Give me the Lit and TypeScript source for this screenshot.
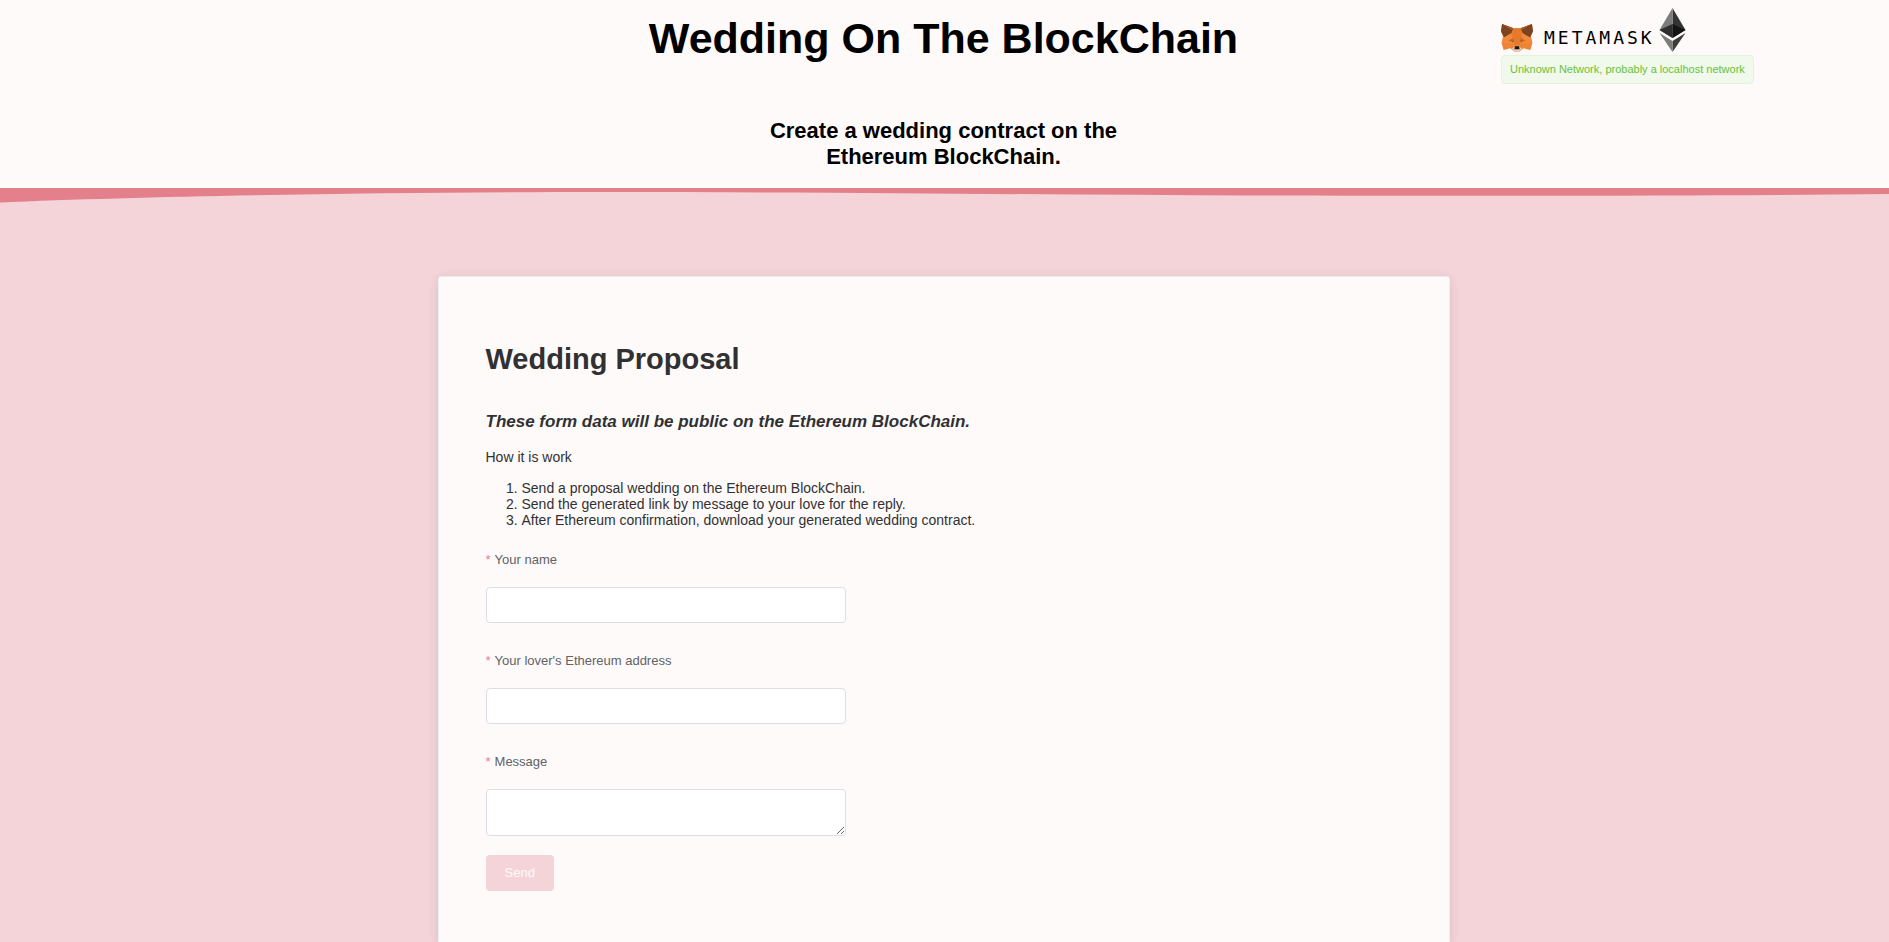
import { LitElement, html, css, svg } from "lit";
import { customElement, property } from "lit/decorators.js";

const fox = svg`
  <path fill="#ee8336" d="M1 1 L12 5 H19 L30 1 L31 8 L29 13 L30.500 19 L28.500 26 L22 24.500 L18 27.500 H13 L9 24.500 L2.500 26 L0.500 19 L2 13 L0 8 Z"/>
  <path fill="#7a4420" d="M1 1 L12 5 L10 10 L3 14 L0 8 Z M30 1 L19 5 L21 10 L28 14 L31 8 Z"/>
  <path fill="#a55a2a" d="M1 1 L12 5 L11 7 Z M30 1 L19 5 L20 7 Z"/>
  <path fill="#f08a3c" d="M3 14 L10 10 L13 20 L1 19 Z M28 14 L21 10 L18 20 L30 19 Z"/>
  <path fill="#e57a2c" d="M12 5 H19 L20 11 L18 21 H13 L11 11 Z"/>
  <path fill="#d56a22" d="M7 17 L12 14 L13 19 Z M24 17 L19 14 L18 19 Z"/>
  <path fill="#8a5a44" d="M9.500 16.500 L12 17 L11.500 18.500 Z M21.500 16.500 L19 17 L19.500 18.500 Z"/>
  <path fill="#e9c9b4" d="M10.500 25 L13 23 H18 L20.500 25 L18 27.500 H13 Z"/>
  <path fill="#161616" d="M13.500 22.500 H17.500 L18 25.500 H13 Z"/>`;

const diamond = svg`
  <path fill="#343434" d="M13 0 V30 L26 22 Z"/>
  <path fill="#7c7c7c" d="M13 0 L0 22 L13 30 Z"/>
  <path fill="#141414" d="M13 16 V30 L26 22 Z"/>
  <path fill="#2e2e2e" d="M13 16 L0 22 L13 30 Z"/>
  <path fill="#3c3c3b" d="M13 33 V44 L26 25 Z"/>
  <path fill="#7c7c7c" d="M13 33 V44 L0 25 Z"/>`;

@customElement("network-status")
export class NetworkStatus extends LitElement {
  @property() message = "";

  static styles = css`
    :host {
      display: block;
    }
    .logos {
      display: flex;
      align-items: flex-end;
      height: 55px;
      box-sizing: border-box;
      padding-bottom: 3px;
    }
    .fox {
      width: 32px;
      height: 29px;
      margin-right: 11px;
    }
    .wordmark {
      font: 18px/28px "DejaVu Sans Mono", monospace;
      letter-spacing: 3px;
      color: #000;
    }
    .diamond {
      width: 27px;
      height: 44px;
      margin-left: 4px;
    }
    .badge {
      display: inline-block;
      box-sizing: border-box;
      padding: 0 8px;
      border: 1px solid #e1f3d8;
      border-radius: 4px;
      background: #f0f9eb;
      color: #67c23a;
      font-size: 11px;
      line-height: 27px;
      white-space: nowrap;
    }
  `;

  render() {
    return html`
      <div class="logos">
        <svg class="fox" viewBox="0 0 31 28" aria-hidden="true">${fox}</svg>
        <span class="wordmark">METAMASK</span>
        <svg class="diamond" viewBox="0 0 26 44" aria-hidden="true">${diamond}</svg>
      </div>
      <span class="badge">${this.message}</span>
    `;
  }
}

@customElement("app-root")
export class AppRoot extends LitElement {
  static styles = css`
    :host {
      display: flex;
      flex-direction: column;
      min-height: 100vh;
      background: #f4d4d8;
      color: #303133;
      font: 14px/16px "Liberation Sans", Arial, sans-serif;
    }
    .header {
      display: grid;
      grid-template-columns: 9fr 26fr 9fr;
      padding: 0 2px 18px 0;
      background: #fffafa;
      color: #000;
    }
    .intro {
      grid-column: 2;
      text-align: center;
    }
    .title {
      margin: 13px 0 55px;
      font-size: 43px;
      line-height: 50px;
    }
    .tagline {
      max-width: 400px;
      margin: 0 auto;
      font-size: 22px;
      line-height: 26px;
    }
    .wave {
      display: block;
      width: 100%;
      height: 16px;
      fill: #e4808c;
    }
    .content {
      flex: 1;
      display: flex;
      justify-content: center;
      padding: 72px 2px 0 0;
    }
    .card {
      box-sizing: border-box;
      width: 1012px;
      max-width: 100%;
      padding: 48px 47px;
      border: 1px solid #ebeef5;
      border-bottom: 0;
      border-radius: 4px 4px 0 0;
      background: #fffafa;
      box-shadow: 0 2px 12px 0 rgba(0, 0, 0, 0.1);
    }
    .heading {
      margin: 17px 0 36px;
      font-size: 29px;
      line-height: 34px;
    }
    .notice {
      margin: 0 0 17px;
      font-size: 17px;
      line-height: 20px;
      font-style: italic;
    }
    .lead {
      margin: 0 0 15px;
    }
    .steps {
      margin: 0 0 12px;
      padding-left: 36px;
    }
    .form {
      display: block;
      width: 360px;
      max-width: 100%;
    }
    .field {
      margin-bottom: 18px;
    }
    .label {
      display: block;
      margin-bottom: 7px;
      font-size: 13px;
      line-height: 40px;
      color: #606266;
    }
    .label::before {
      content: "*";
      margin-right: 4px;
      color: #e4808c;
    }
    .control {
      display: block;
      box-sizing: border-box;
      width: 100%;
      height: 36px;
      padding: 5px 15px;
      border: 1px solid #dcdfe6;
      border-radius: 4px;
      background: #fff;
      color: #606266;
      font: inherit;
    }
    .control.area {
      height: 47px;
      resize: vertical;
    }
    .send {
      height: 36px;
      margin-top: 1px;
      padding: 0 19px;
      border: 0;
      border-radius: 4px;
      background: #f4d4d8;
      color: #fffafa;
      font: 13px/36px "Liberation Sans", Arial, sans-serif;
    }
  `;

  render() {
    return html`
      <header class="header">
        <div class="intro">
          <h1 class="title">Wedding On The BlockChain</h1>
          <h2 class="tagline">Create a wedding contract on the Ethereum BlockChain.</h2>
        </div>
        <network-status message="Unknown Network, probably a localhost network"></network-status>
      </header>
      <svg class="wave" viewBox="0 0 1889 16" preserveAspectRatio="none" aria-hidden="true">
        <path d="M0 0 H1889 V6 C1700 8 1450 8 1250 7.5 C1050 7 850 4 600 4 C400 4 150 8 0 14.5 Z" />
      </svg>
      <main class="content">
        <section class="card">
          <h1 class="heading">Wedding Proposal</h1>
          <h3 class="notice">These form data will be public on the Ethereum BlockChain.</h3>
          <p class="lead">How it is work</p>
          <ol class="steps">
            <li>Send a proposal wedding on the Ethereum BlockChain.</li>
            <li>Send the generated link by message to your love for the reply.</li>
            <li>After Ethereum confirmation, download your generated wedding contract.</li>
          </ol>
          <form class="form" @submit=${(e: Event) => e.preventDefault()}>
            <div class="field">
              <label class="label" for="name">Your name</label>
              <input class="control" id="name" type="text" />
            </div>
            <div class="field">
              <label class="label" for="address">Your lover's Ethereum address</label>
              <input class="control" id="address" type="text" />
            </div>
            <div class="field">
              <label class="label" for="message">Message</label>
              <textarea class="control area" id="message"></textarea>
            </div>
            <button class="send" type="submit" disabled>Send</button>
          </form>
        </section>
      </main>
    `;
  }
}
